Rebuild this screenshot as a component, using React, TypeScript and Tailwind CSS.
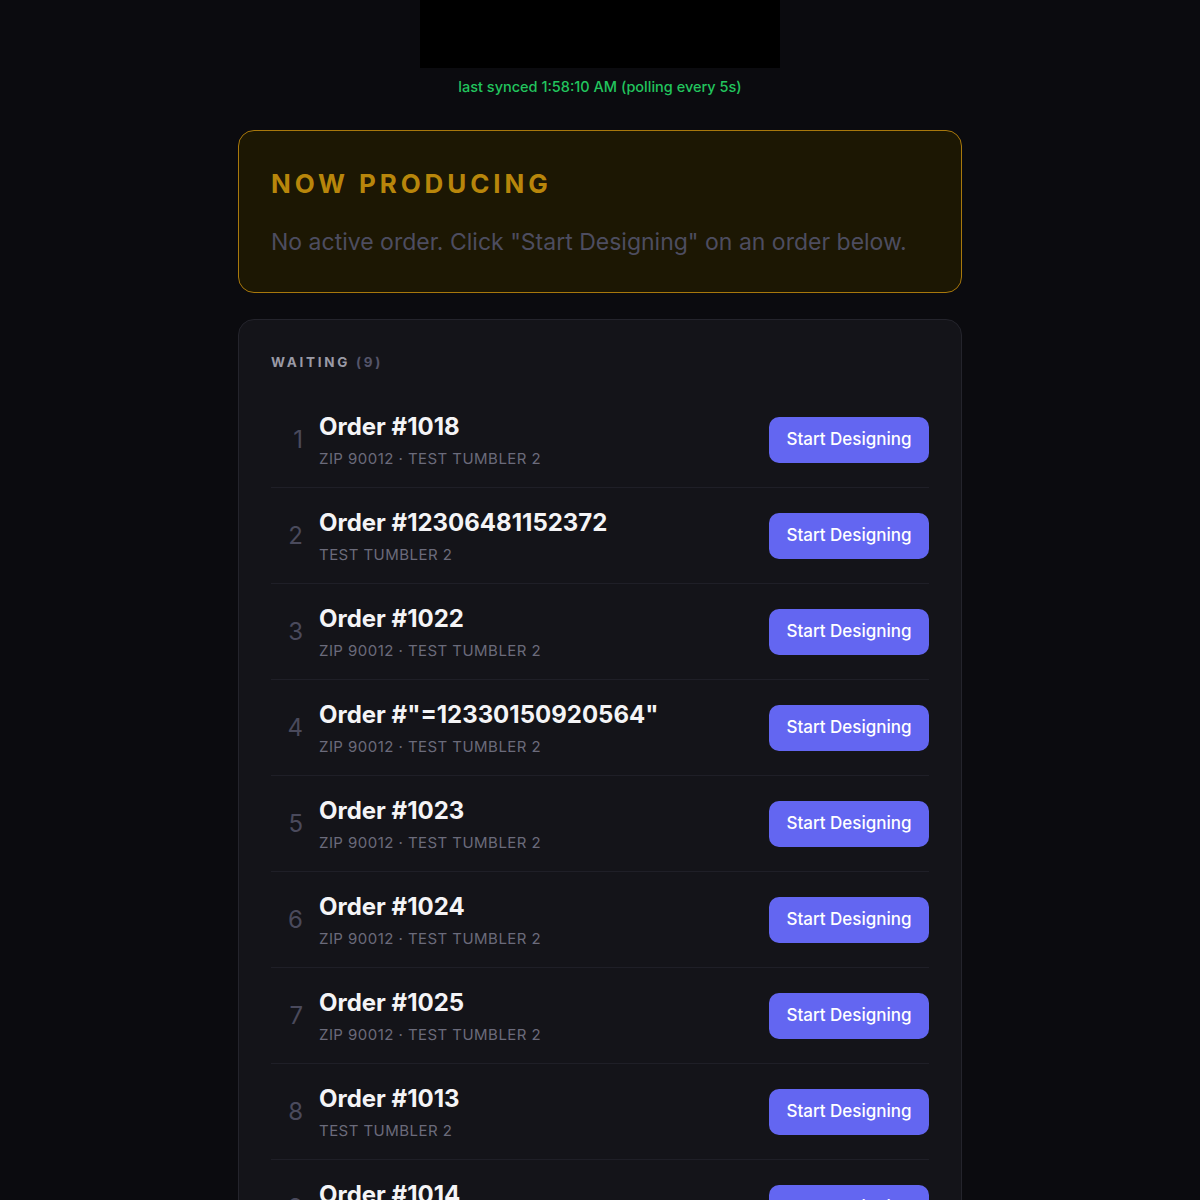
import React from "react"

interface Order {
  id: string
  meta: string
}

const orders: Order[] = [
  { id: "1018", meta: "ZIP 90012 · TEST TUMBLER 2" },
  { id: "12306481152372", meta: "TEST TUMBLER 2" },
  { id: "1022", meta: "ZIP 90012 · TEST TUMBLER 2" },
  { id: '"=12330150920564"', meta: "ZIP 90012 · TEST TUMBLER 2" },
  { id: "1023", meta: "ZIP 90012 · TEST TUMBLER 2" },
  { id: "1024", meta: "ZIP 90012 · TEST TUMBLER 2" },
  { id: "1025", meta: "ZIP 90012 · TEST TUMBLER 2" },
  { id: "1013", meta: "TEST TUMBLER 2" },
  { id: "1014", meta: "ZIP 90012 · TEST TUMBLER 2" },
]

function OrderRow({ order, index }: { order: Order; index: number }) {
  return (
    <div className="flex items-center gap-4 border-b border-[#1f1f27] py-[18px] pl-4">
      <div className="w-4 text-right text-[24px] leading-none text-[#4a4a5c]">{index + 1}</div>
      <div className="flex flex-1 flex-col">
        <div className="text-[24px] font-bold leading-[34px] text-[#f4f4f6]">Order #{order.id}</div>
        <div className="mt-[5px] text-[15px] leading-5 tracking-[0.03em] text-[#6b6b7b]">{order.meta}</div>
      </div>
      <button className="h-[46px] w-[160px] rounded-[10px] bg-[#6366f1] text-[17px] font-medium text-white">
        Start Designing
      </button>
    </div>
  )
}

export default function App() {
  return (
    <div className="flex min-h-[1200px] flex-col items-center bg-[#0b0b0f] font-['Inter',sans-serif]">
      <div className="h-[68px] w-[360px] bg-black" />
      <div className="mt-[10px] text-[14.5px] font-medium leading-[18px] text-[#22c55e]">
        last synced 1:58:10 AM (polling every 5s)
      </div>

      <div className="mt-[34px] w-[724px] rounded-2xl border border-[#a8780c] bg-[#1c1703] px-8 pt-[37px] pb-[34px]">
        <div className="text-[26px] font-bold leading-8 tracking-[0.15em] text-[#b8860b]">NOW PRODUCING</div>
        <div className="mt-[26px] text-[23px] leading-8 text-[#4d4d60]">
          No active order. Click "Start Designing" on an order below.
        </div>
      </div>

      <div className="mt-[26px] w-[724px] rounded-2xl border border-[#24242c] bg-[#141419] px-8 pt-[32px] pb-8">
        <div className="text-[13.5px] font-bold leading-5 tracking-[0.2em] text-[#9a9aa6]">
          WAITING <span className="text-[#55556a]">(9)</span>
        </div>
        <div className="mt-[20px] flex flex-col">
          {orders.map((o, i) => (
            <OrderRow key={i} order={o} index={i} />
          ))}
        </div>
      </div>
    </div>
  )
}
